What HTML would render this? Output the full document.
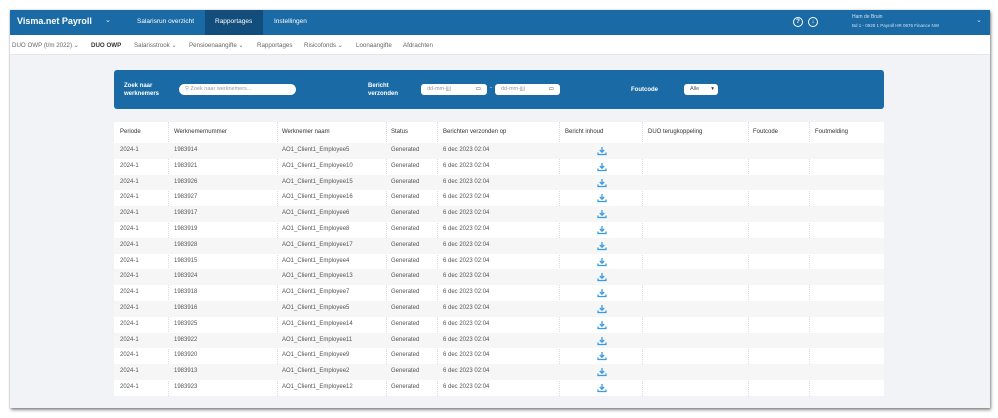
<!DOCTYPE html>
<html><head><meta charset="utf-8"><style>
*{margin:0;padding:0;box-sizing:border-box}
body{width:998px;height:418px;background:#fff;font-family:"Liberation Sans",sans-serif;position:relative;overflow:hidden}
.frame{position:absolute;left:10px;top:10px;width:980px;height:398px;background:#f2f3f7;box-shadow:1px 2px 3px rgba(0,0,0,.45),0 0 2px rgba(0,0,0,.2)}
.hdr{position:absolute;left:0;top:0;width:980px;height:25px;background:#1a6aa5;color:#fff}
.abs{position:absolute;white-space:nowrap}
.sub{position:absolute;left:0;top:25px;width:980px;height:20px;background:#fff;border-bottom:1px solid #e4e6ea;font-size:6.2px;color:#666}
.panel{position:absolute;left:104px;top:60px;width:770px;height:39px;background:#1a6aa5;border-radius:3px;color:#fff;font-size:6px;font-weight:bold}
.inp{position:absolute;background:#fff;border-radius:3px;height:11px;color:#999;font-weight:normal;font-size:5.5px;line-height:11px;padding-left:6px}
.tbl{position:absolute;left:104px;top:112px;width:770px;height:274px;background:#fff}
.row{position:absolute;left:0;width:770px;height:15.8px;font-size:6px;color:#555;line-height:15.8px}
.row.g{background:#f6f6f7}
.row span{position:absolute}
.vl{position:absolute;top:0;height:274px;border-left:1px dotted #dcdcdc}
</style></head><body>
<div class="frame">
 <div class="hdr">
  <div class="abs" style="left:7px;top:6px;font-size:9px;font-weight:bold">Visma.net Payroll</div>
  <div class="abs" style="left:95px;top:6px;font-size:7px">⌄</div>
  <div class="abs" style="left:127px;top:8px;font-size:6.5px">Salarisrun overzicht</div>
  <div class="abs" style="left:195px;top:0;width:58px;height:25px;background:#124d7c"></div>
  <div class="abs" style="left:205px;top:8px;font-size:6.5px">Rapportages</div>
  <div class="abs" style="left:264px;top:8px;font-size:6.5px">Instellingen</div>
  <div class="abs" style="left:783px;top:7px;width:10px;height:10px;border:1.2px solid #fff;border-radius:50%;font-size:6.5px;font-weight:bold;text-align:center;line-height:8px">?</div>
  <div class="abs" style="left:798px;top:7px;width:10px;height:10px;border:1.2px solid #fff;border-radius:50%;font-size:6.5px;font-weight:bold;text-align:center;line-height:8px">↓</div>
  <div class="abs" style="left:842px;top:4px;font-size:5px;color:#cfe0ef">Ham de Bruin</div>
  <div class="abs" style="left:842px;top:13px;font-size:4.5px;color:#cfe0ef">Bd 1 - 0928 1 Payroll HR 0976 Finance NW</div>
  <div class="abs" style="left:966px;top:6px;font-size:7px;color:#cfe0ef">⌄</div>
 </div>
 <div class="sub">
  <div class="abs" style="left:2px;top:7px">DUO OWP (t/m 2022) ⌄</div>
  <div class="abs" style="left:81px;top:7px;font-weight:bold;color:#333">DUO OWP</div>
  <div class="abs" style="left:124px;top:7px">Salarisstrook ⌄</div>
  <div class="abs" style="left:179px;top:7px">Pensioenaangifte ⌄</div>
  <div class="abs" style="left:247px;top:7px">Rapportages</div>
  <div class="abs" style="left:294px;top:7px">Risicofonds ⌄</div>
  <div class="abs" style="left:346px;top:7px">Loonaangifte</div>
  <div class="abs" style="left:393px;top:7px">Afdrachten</div>
 </div>
 <div class="panel">
  <div class="abs" style="left:10px;top:12px;line-height:8px">Zoek naar<br>werknemers</div>
  <div class="inp" style="left:65px;top:14px;width:117px;border-radius:6px">⚲ Zoek naar werknemers...</div>
  <div class="abs" style="left:254px;top:12px;line-height:8px">Bericht<br>verzonden</div>
  <div class="inp" style="left:307px;top:14px;width:66px">dd-mm-jjjj <span style="position:absolute;right:6px;color:#444">▭</span></div>
  <div class="abs" style="left:376px;top:15px;font-weight:normal">-</div>
  <div class="inp" style="left:381px;top:14px;width:65px">dd-mm-jjjj <span style="position:absolute;right:6px;color:#444">▭</span></div>
  <div class="abs" style="left:517px;top:17px">Foutcode</div>
  <div class="inp" style="left:570px;top:14px;width:34px;color:#555">Alle <span style="position:absolute;right:4px;color:#333">▾</span></div>
 </div>
 <div class="tbl" id="t">
  <div class="vl" style="left:54px"></div><div class="vl" style="left:163px"></div><div class="vl" style="left:272px"></div><div class="vl" style="left:323px"></div><div class="vl" style="left:445px"></div><div class="vl" style="left:528px"></div><div class="vl" style="left:634px"></div><div class="vl" style="left:695px"></div>
  <div class="row" style="top:0;height:21px;line-height:21px;color:#333"><span style="left:6px">Periode</span><span style="left:60px">Werknemernummer</span><span style="left:168px">Werknemer naam</span><span style="left:277px">Status</span><span style="left:329px">Berichten verzonden op</span><span style="left:451px">Bericht inhoud</span><span style="left:534px">DUO terugkoppeling</span><span style="left:639px">Foutcode</span><span style="left:701px">Foutmelding</span></div>
 </div>
</div>
<script>
var d=[["1983914","5"],["1983921","10"],["1983926","15"],["1983927","16"],["1983917","6"],["1983919","8"],["1983928","17"],["1983915","4"],["1983924","13"],["1983918","7"],["1983916","5"],["1983925","14"],["1983922","11"],["1983920","9"],["1983913","2"],["1983923","12"]];
var t=document.getElementById('t'),h='';
var ic='<svg width="10" height="10" viewBox="0 0 10 10" style="position:absolute;left:483px;top:3px"><path d="M5 1v5M2.8 4l2.2 2.2L7.2 4M1 6.5v2h8v-2" fill="none" stroke="#3a9be0" stroke-width="1.3"/></svg>';
d.forEach(function(r,i){h+='<div class="row'+(i%2==0?' g':'')+'" style="top:'+(21+i*15.8)+'px"><span style="left:6px">2024-1</span><span style="left:60px">'+r[0]+'</span><span style="left:168px">AO1_Client1_Employee'+r[1]+'</span><span style="left:277px">Generated</span><span style="left:329px">6 dec 2023 02:04</span>'+ic+'</div>';});
t.insertAdjacentHTML('beforeend',h);
</script>
</body></html>
